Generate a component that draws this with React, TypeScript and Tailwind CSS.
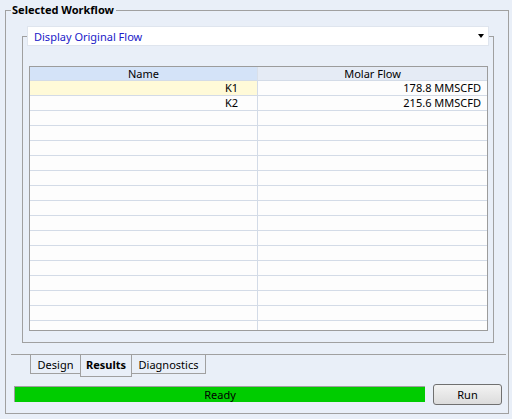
import React from "react";

const rows = [
  { name: "K1", flow: "178.8 MMSCFD" },
  { name: "K2", flow: "215.6 MMSCFD" },
];

const font = { fontFamily: '"Noto Sans", "Open Sans", sans-serif' };

const Tab = ({
  label,
  active,
  width,
}: {
  label: string;
  active?: boolean;
  width: string;
}) => (
  <div
    className={`${width} ${
      active ? "h-[22px] font-bold" : "h-[19px]"
    } -ml-px first:ml-0 flex items-start justify-center pt-[2px] border-x border-b border-[#a0a0a0] leading-[15px]`}
  >
    {label}
  </div>
);

const App = () => {
  const blanks = Array.from({ length: 15 });

  return (
    <div
      className="w-[512px] h-[419px] overflow-hidden bg-[#e9eff8] pt-[10px] pl-[5px] text-[11px] text-black"
      style={font}
    >
      <div className="relative w-[504px] h-[404px] border border-[#a0a0a0]">
        <div className="absolute -top-[9px] left-[5px] pl-px pr-[2px] bg-[#e9eff8] font-bold leading-[15px]">
          Selected Workflow
        </div>

        {/* inner group, combobox sits on its top edge */}
        <div className="relative ml-[16px] mt-[25px] w-[472px] h-[307px] border border-[#a0a0a0]">
          <div className="absolute -top-[11px] left-[4px] w-[462px] h-[20px] flex items-center justify-between pl-[6px] pr-[4px] bg-white border border-[#dfe5ee] text-[#2020c8] leading-[15px]">
            <span>Display Original Flow</span>
            <span className="w-0 h-0 border-l-[3px] border-r-[3px] border-t-[4px] border-l-transparent border-r-transparent border-t-black" />
          </div>

          <div className="ml-[6px] mt-[29px] w-[459px] h-[265px] border border-[#9c9c9c] bg-[#fdfdfd] overflow-hidden">
            <div className="flex h-[14px] border-b border-[#d3dbe7] leading-[13px]">
              <div className="w-[228px] h-[13px] text-center bg-[#d4e3f8] border-r border-[#d9e0ea]">
                Name
              </div>
              <div className="flex-1 h-[13px] text-center bg-[#e5ebf5]">
                Molar Flow
              </div>
            </div>
            {rows.map((r, i) => (
              <div
                key={r.name}
                className="flex h-[15px] border-b border-[#d3dbe7] leading-[14px]"
              >
                <div
                  className={`w-[228px] text-right pr-[19px] border-r border-[#d3dbe7] ${
                    i === 0 ? "bg-[#fffad8]" : ""
                  }`}
                >
                  {r.name}
                </div>
                <div className="flex-1 text-right pr-[6px]">{r.flow}</div>
              </div>
            ))}
            {blanks.map((_, i) => (
              <div key={i} className="flex h-[15px] border-b border-[#d3dbe7]">
                <div className="w-[228px] border-r border-[#d3dbe7]" />
                <div className="flex-1" />
              </div>
            ))}
          </div>
        </div>

        {/* tabs hang below the strip line */}
        <div className="ml-[5px] mt-[11px] w-[495px] border-t border-[#a0a0a0]">
          <div className="flex items-start pl-[19px] h-[22px]">
            <Tab label="Design" width="w-[51px]" />
            <Tab label="Results" width="w-[52px]" active />
            <Tab label="Diagnostics" width="w-[75px]" />
          </div>
        </div>

        {/* status + run */}
        <div className="flex items-start ml-[8px] mt-[7px]">
          <div className="mt-[2px] w-[411px] h-[16px] border-t border-l border-[#a0a0a0] bg-[#00cc00] text-center leading-[15px]">
            Ready
          </div>
          <button className="ml-[8px] w-[69px] h-[21px] rounded-[3px] border border-[#707070] bg-gradient-to-b from-[#f3f3f3] to-[#dcdcdc] leading-[15px] text-black">
            Run
          </button>
        </div>
      </div>
    </div>
  );
};

export default App;
